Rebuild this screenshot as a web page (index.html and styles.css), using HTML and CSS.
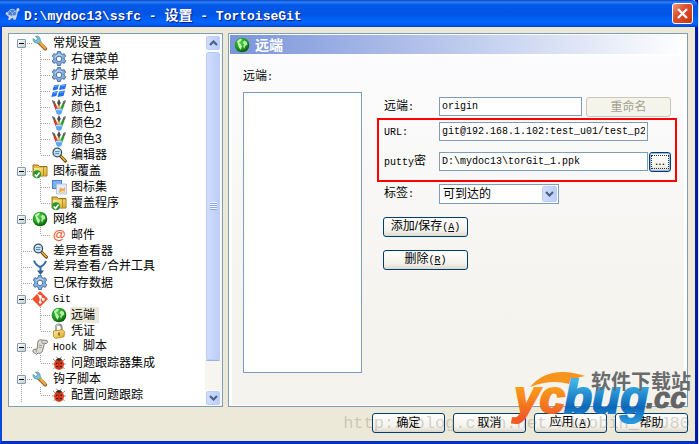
FILE: index.html
```html
<!DOCTYPE html>
<html lang="zh-CN">

<head>
    <meta charset="UTF-8" />
    <title>设置 - TortoiseGit</title>
    <link rel="stylesheet" href="styles.css">
</head>

<body>

    <!-- icons -->
    <svg class="defs" width="0" height="0">
        <defs>
            <linearGradient id="orange" x1="0" y1="0" x2="0" y2="1">
                <stop offset="0.2" stop-color="#fbaa19" />
                <stop offset="0.9" stop-color="#f15a24" />
            </linearGradient>
            <linearGradient id="blue" x1="0" y1="0" x2="0" y2="1">
                <stop offset="0.2" stop-color="#3fb3e6" />
                <stop offset="0.7" stop-color="#0d67b8" />
                <stop offset="1" stop-color="#2a9be0" />
            </linearGradient>
            <radialGradient id="ball" cx="0.4" cy="0.35" r="0.7">
                <stop offset="0" stop-color="#4ed04a" />
                <stop offset="0.6" stop-color="#1d9a1d" />
                <stop offset="1" stop-color="#0b4a0b" />
            </radialGradient>
            <linearGradient id="gold" x1="0" y1="0" x2="1" y2="1">
                <stop offset="0" stop-color="#fdf0a0" />
                <stop offset="1" stop-color="#dca820" />
            </linearGradient>
        </defs>
        <symbol id="i-wrench" viewBox="0 0 16 16">
            <path d="M7 7.500l6.300 6.200" stroke="#8a5a1c" stroke-width="3.600" stroke-linecap="round" />
            <path d="M7.400 7.400l5.800 5.800" stroke="#f6a93a" stroke-width="2.200" stroke-linecap="round" />
            <path d="M3.600 1.300l2 2-.6 1.700-1.800.4-2-2C.6 5.600 2.300 8 4.600 8c1 0 1.500 0 2.200.6l2-2.100C8.200 5.800 8.300 5.200 8.200 4.400 8 2 6 .5 3.600 1.300z" fill="#7cc4d8" stroke="#4a8ea6" stroke-width=".8" />
        </symbol>
        <symbol id="i-gear" viewBox="0 0 16 16">
            <path fill-rule="evenodd" d="M6.600.6h2.800l.5 2 1.300.7 2-.6 1.500 2.500-1.500 1.500v1.500l1.600 1.600-1.500 2.500-2.100-.7-1.300.8-.5 2.100H6.600l-.5-2.100-1.300-.8-2.100.7-1.500-2.500 1.600-1.600V6.700L1.300 5.200l1.500-2.500 2 .6 1.300-.7zM8 5.200a2.700 2.700 0 1 0 0 5.400 2.700 2.700 0 0 0 0-5.400z" fill="#85afe0" stroke="#3d6596" stroke-width=".9" />
            <path d="M4.200 6.500a4.200 4.200 0 0 1 7-1.500" fill="none" stroke="#c9def4" />
        </symbol>
        <symbol id="i-flag" viewBox="0 0 16 16">
            <path d="M3 2.500l5-1-1.500 5-5 1zM9.500 2l6-1-1.500 5-6 1zM1.800 9l5-1-1.500 5-5 1zM8 8.500l6-1L12.500 13l-6 1z" fill="#2470ee" />
            <path d="M3.800 3.500l3-.6M10.300 3l3.600-.6M2.600 10l3-.6M8.800 9.500l3.600-.6" stroke="#7db5fa" />
        </symbol>
        <symbol id="i-brush" viewBox="0 0 16 16">
            <path d="M3.500 5l3.300 8" stroke="#d0392b" stroke-width="2.600" />
            <path d="M12.500 5L9.200 13" stroke="#2f9e36" stroke-width="2.600" />
            <path d="M8 6v8" stroke="#e8b33b" stroke-width="2.400" />
            <path d="M1 1l1 3.500 2.500 1L4 2.500zM15 1l-1 3.500-2.500 1 .5-3zM6 4l2-4 1.800 4-1.800 3z" fill="#4a4a4a" />
            <path d="M2 1.500l1.500 3M14 1.500l-1.500 3" stroke="#999" stroke-width=".6" />
            <path d="M4.300 9.500h7.400L10.300 15q-2.300 1.500-4.600 0z" fill="#5ba6f0" />
            <path d="M5 10.700h6" stroke="#d3e9fc" />
        </symbol>
        <symbol id="i-lens" viewBox="0 0 16 16">
            <path d="M9.500 9l4.800 5" stroke="#5e3b0a" stroke-width="3.200" stroke-linecap="round" />
            <path d="M10 9.300l4.200 4.400" stroke="#f0b32e" stroke-width="1.600" stroke-linecap="round" />
            <circle cx="6.300" cy="5.500" r="4.300" fill="#bfe0f5" stroke="#3c4c5c" stroke-width="1.200" />
            <path d="M4 4.500h4.500M4 6.500h4" stroke="#5a90b8" />
            <path d="M3.600 3.800q1-1.400 2.800-1.300" stroke="#fff" fill="none" />
        </symbol>
        <symbol id="i-folder" viewBox="0 0 16 16">
            <path d="M1 4.500V2h5l1.500 1.500H15V13H1z" fill="#e5bd45" stroke="#8a6914" stroke-width=".9" />
            <path d="M2 5h12.500v7.500H2z" fill="url(#gold)" />
            <path d="M11.500 4v9" stroke="#b98d24" />
            <circle cx="5" cy="11.300" r="4" fill="#27962b" />
            <path d="M2.700 11.500l1.800 1.900 3-4" stroke="#fff" stroke-width="1.600" fill="none" />
        </symbol>
        <symbol id="i-set" viewBox="0 0 16 16">
            <path d="M1 1h10v9H1z" fill="#4b7ed0" />
            <path d="M2 2h8v3L5 9H2z" fill="#7fb0ee" />
            <path d="M5.500 5h10v10h-10z" fill="#e3ecf8" stroke="#a5bbdc" stroke-width=".8" />
            <path d="M8 13.500l1-5 3 1.500 2-2v5.500z" fill="#f5a347" />
            <path d="M9.500 13.500l1-2 2 .5 1-1v2.500z" fill="#fbd9a2" />
        </symbol>
        <symbol id="i-globe" viewBox="0 0 16 16">
            <circle cx="8" cy="8" r="7.300" fill="url(#ball)" />
            <path d="M3 4.200q2-2.400 5-2.400l-.8 2L5 5.500l1.500 1.700L8 9.300l-1.300 3.500L5 10.500 4.200 7.700z" fill="#c9f3b8" />
            <path d="M10 3.500l2.700 1.300.8 3-2 .6-1.300 3-1-2 .8-2.100L8.600 6z" fill="#b5eba3" />
        </symbol>
        <symbol id="i-merge" viewBox="0 0 16 16">
            <path d="M2 1.500q1.500 4.500 6 6.500M14 2q-1.500 4-5.500 6M8.500 7v7" fill="none" stroke="#3a6ca5" stroke-width="2" />
            <path d="M5 11.500h7L8.500 16z" fill="#2c5d96" />
        </symbol>
        <symbol id="i-git" viewBox="0 0 16 16">
            <path d="M8 0l8 8-8 8-8-8z" fill="#f05133" />
            <path d="M5.500 2.800l2.700 2.700v5.500M8.200 5.700l3 2.800" stroke="#fff" stroke-width="1.100" fill="none" />
            <circle cx="8.200" cy="5.500" r="1.400" fill="#fff" />
            <circle cx="8.200" cy="11.300" r="1.400" fill="#fff" />
            <circle cx="11.300" cy="8.500" r="1.400" fill="#fff" />
        </symbol>
        <symbol id="i-lock" viewBox="0 0 16 16">
            <path d="M5 8V4.300q0-2.800 2.800-2.800t2.800 2.800V8" fill="none" stroke="#8d8d8d" stroke-width="2" />
            <path d="M5 7V4.300q0-2.800 2.800-2.800" fill="none" stroke="#ddd" stroke-width=".8" />
            <path d="M2.500 8l9-1.300 2 1.800-.5 5.300-8.500 1.700-2-2z" fill="url(#gold)" stroke="#b0831a" stroke-width=".8" />
            <path d="M8 9.500v3" stroke="#6b4c08" stroke-width="1.400" />
        </symbol>
        <symbol id="i-script" viewBox="0 0 16 16">
            <path d="M6 2q2-2 4-1l5 .5q1.500 2-.5 3h-2L11 10q0 3-3 4.500l-2-.5-1.500 1.500L1 13q-1-2.500 2-3l2 .3z" fill="#dcdcd4" stroke="#77776f" stroke-width=".9" />
            <path d="M9 1.500q2 .5 1 3l4-.3M3 10.500q2 .3 1.500 3M7 6l3 .8M6.500 8l3 .8" stroke="#8d8d85" fill="none" stroke-width=".8" />
        </symbol>
        <symbol id="i-bug" viewBox="0 0 16 16">
            <path d="M2 4l3 2.500M14 4l-3 2.500M1 9h14M2.500 14L5 11M13.500 14L11 11M5.500 1.500L7 4M10.500 1.500L9 4" stroke="#777" stroke-width=".8" />
            <ellipse cx="8" cy="9.300" rx="5" ry="5.500" fill="#e0401c" />
            <path d="M4.800 5q3.200-4 6.400 0-3 1.500-6.400 0z" fill="#2b2b2b" />
            <path d="M8 5.500v9" stroke="#8f2010" stroke-width=".8" />
            <circle cx="5.700" cy="8.300" r=".8" fill="#2a0a05" />
            <circle cx="10.300" cy="8.300" r=".8" fill="#2a0a05" />
            <circle cx="6" cy="11.600" r=".8" fill="#2a0a05" />
            <circle cx="10" cy="11.600" r=".8" fill="#2a0a05" />
        </symbol>
        <symbol id="i-turtle" viewBox="0 0 16 16">
            <path d="M1.500 8q0-2 2-2l2 2 6.500-1 .5-4q1.500-2 3 0l-.3 2-1.400.8-.8 4-1.500 4H9.500l-.5-2-2 1-1.500 1.500-1.500-1L5 11z" fill="#cfd6dd" />
            <path d="M3.500 8.800Q4.500 3 8.500 3.300T12.500 9q-4.500 2.600-9-.2z" fill="#4d7fd6" stroke="#bdd4f7" stroke-width=".8" />
            <path d="M6 5l2.500 2L11 5M8.500 7v3" stroke="#9dc0f5" stroke-width=".8" fill="none" />
        </symbol>
        <symbol id="i-down" viewBox="0 0 9 6">
            <path d="M1 1l3.500 3.500L8 1" fill="none" stroke="#4d6185" stroke-width="2.200" />
        </symbol>
    </svg>

    <div class="window">
        <header class="titlebar">
            <svg class="icon"><use href="#i-turtle" /></svg>
            <h1>D:\mydoc13\ssfc - <span class="cjk">设置</span> - TortoiseGit</h1>
            <button class="close" type="button" aria-label="关闭">
                <svg width="11" height="11" viewBox="0 0 11 11">
                    <path d="M1 1l9 9M10 1l-9 9" stroke="#fff" stroke-width="2.200" />
                </svg>
            </button>
        </header>

        <main class="panels">
            <nav class="tree-box">
                <ul class="tree">
                    <li>
                        <div class="row"><button class="toggle" aria-label="折叠"></button><i class="dash"></i><svg class="icon"><use href="#i-wrench" /></svg><span class="name">常规设置</span></div>
                        <ul>
                            <li class="row"><i class="dash"></i><svg class="icon"><use href="#i-gear" /></svg><span class="name">右键菜单</span></li>
                            <li class="row"><i class="dash"></i><svg class="icon"><use href="#i-gear" /></svg><span class="name">扩展菜单</span></li>
                            <li class="row"><i class="dash"></i><svg class="icon"><use href="#i-flag" /></svg><span class="name">对话框</span></li>
                            <li class="row"><i class="dash"></i><svg class="icon"><use href="#i-brush" /></svg><span class="name">颜色1</span></li>
                            <li class="row"><i class="dash"></i><svg class="icon"><use href="#i-brush" /></svg><span class="name">颜色2</span></li>
                            <li class="row"><i class="dash"></i><svg class="icon"><use href="#i-brush" /></svg><span class="name">颜色3</span></li>
                            <li class="row"><i class="dash"></i><svg class="icon"><use href="#i-lens" /></svg><span class="name">编辑器</span></li>
                        </ul>
                    </li>
                    <li>
                        <div class="row"><button class="toggle" aria-label="折叠"></button><i class="dash"></i><svg class="icon"><use href="#i-folder" /></svg><span class="name">图标覆盖</span></div>
                        <ul>
                            <li class="row"><i class="dash"></i><svg class="icon"><use href="#i-set" /></svg><span class="name">图标集</span></li>
                            <li class="row"><i class="dash"></i><svg class="icon"><use href="#i-folder" /></svg><span class="name">覆盖程序</span></li>
                        </ul>
                    </li>
                    <li>
                        <div class="row"><button class="toggle" aria-label="折叠"></button><i class="dash"></i><svg class="icon"><use href="#i-globe" /></svg><span class="name">网络</span></div>
                        <ul>
                            <li class="row"><i class="dash"></i><span class="icon at">@</span><span class="name">邮件</span></li>
                        </ul>
                    </li>
                    <li>
                        <div class="row leaf"><i class="dash"></i><svg class="icon"><use href="#i-lens" /></svg><span class="name">差异查看器</span></div>
                    </li>
                    <li>
                        <div class="row leaf"><i class="dash"></i><svg class="icon"><use href="#i-merge" /></svg><span class="name">差异查看<span class="latin">/</span>合并工具</span></div>
                    </li>
                    <li>
                        <div class="row leaf"><i class="dash"></i><svg class="icon"><use href="#i-gear" /></svg><span class="name">已保存数据</span></div>
                    </li>
                    <li>
                        <div class="row"><button class="toggle" aria-label="折叠"></button><i class="dash"></i><svg class="icon"><use href="#i-git" /></svg><span class="name"><span class="latin">Git</span></span></div>
                        <ul>
                            <li class="row"><i class="dash"></i><svg class="icon"><use href="#i-globe" /></svg><span class="name selected">远端</span></li>
                            <li class="row"><i class="dash"></i><svg class="icon"><use href="#i-lock" /></svg><span class="name">凭证</span></li>
                        </ul>
                    </li>
                    <li>
                        <div class="row"><button class="toggle" aria-label="折叠"></button><i class="dash"></i><svg class="icon"><use href="#i-script" /></svg><span class="name"><span class="latin">Hook </span>脚本</span></div>
                        <ul>
                            <li class="row"><i class="dash"></i><svg class="icon"><use href="#i-bug" /></svg><span class="name">问题跟踪器集成</span></li>
                        </ul>
                    </li>
                    <li>
                        <div class="row"><button class="toggle" aria-label="折叠"></button><i class="dash"></i><svg class="icon"><use href="#i-wrench" /></svg><span class="name">钩子脚本</span></div>
                        <ul>
                            <li class="row"><i class="dash"></i><svg class="icon"><use href="#i-bug" /></svg><span class="name">配置问题跟踪</span></li>
                        </ul>
                    </li>
                </ul>
                <div class="scrollbar">
                    <button class="arrow up" type="button" aria-label="向上"><svg width="9" height="6"><use href="#i-down" /></svg></button>
                    <div class="thumb"><i class="grip"></i></div>
                    <button class="arrow" type="button" aria-label="向下"><svg width="9" height="6"><use href="#i-down" /></svg></button>
                </div>
            </nav>

            <section class="page">
                <h2 class="page-title"><svg class="icon"><use href="#i-globe" /></svg>远端</h2>
                <div class="page-body">
                    <div class="remotes">
                        <span id="remotesLabel">远端<span class="latin">:</span></span>
                        <div class="remote-list" role="listbox" aria-labelledby="remotesLabel"></div>
                    </div>
                    <form class="form">
                        <div class="field">
                            <label for="remote">远端<span class="latin">:</span></label>
                            <input type="text" id="remote" value="origin" />
                            <button class="btn rename" type="button" disabled>重命名</button>
                        </div>
                        <div class="marked">
                            <div class="field">
                                <label for="url"><span class="latin">URL:</span></label>
                                <input class="url" type="text" id="url" value="git@192.168.1.102:test_u01/test_p2" />
                            </div>
                            <div class="field">
                                <label for="key"><span class="latin">putty</span>密</label>
                                <input type="text" id="key" value="D:\mydoc13\torGit_1.ppk" />
                                <button class="btn browse" type="button"><span>...</span></button>
                            </div>
                        </div>
                        <div class="field">
                            <label for="tags">标签<span class="latin">:</span></label>
                            <div class="combo">
                                <select id="tags">
                                    <option>可到达的</option>
                                </select>
                                <span class="drop"><svg width="9" height="6"><use href="#i-down" /></svg></span>
                            </div>
                        </div>
                        <div class="actions">
                            <button class="btn" type="button">添加/保存<span class="latin">(<u>A</u>)</span></button>
                            <button class="btn" type="button">删除<span class="latin">(<u>R</u>)</span></button>
                        </div>
                    </form>
                </div>
            </section>
        </main>

        <footer class="footer">
            <button class="btn" type="button">确定</button>
            <button class="btn" type="button">取消</button>
            <button class="btn" type="button">应用<span class="latin">(<u>A</u>)</span></button>
            <button class="btn" type="button">帮助</button>
        </footer>

        <div class="watermark">http://blog.csdn.net/xiaobin_HLJ80</div>
        <svg class="logo" width="184" height="60" viewBox="0 0 184 60">
            <path d="M19 18Q38-5 74 7 64 8 58 15 40 10 19 18z" fill="#f7941d" />
            <g class="logo-text">
                <text x="3" y="44" fill="url(#orange)" stroke="url(#orange)">yc</text>
                <text x="53" y="44" fill="url(#blue)" stroke="url(#blue)">bug</text>
                <text x="135" y="39" class="logo-cc">.cc</text>
            </g>
            <text x="80" y="20" class="logo-site">软件下载站</text>
        </svg>
    </div>

</body>

</html>
```

FILE: styles.css
```css
* {
    box-sizing: border-box;
}

body {
    margin: 0;
    padding-right: 1px;
    background: #dfe6f2;
    font-family: "Liberation Sans", "Noto Sans CJK SC", sans-serif;
    font-size: 12px;
    line-height: 16px;
    color: #000;
}

button,
input,
select {
    font: inherit;
    color: inherit;
    margin: 0;
    padding: 0;
}

ul {
    list-style: none;
    margin: 0;
    padding: 0;
}

.defs {
    position: absolute;
}

.icon {
    width: 16px;
    height: 16px;
    flex: none;
}

.latin {
    font-family: "Liberation Mono", monospace;
    font-size: 10px;
    white-space: pre;
}

.window {
    position: relative;
    display: flex;
    flex-direction: column;
    min-height: 100vh;
    background: #ece9d8;
    border: solid #0a48e0;
    border-width: 0 3px 3px 2px;
    border-right-color: #0019a8;
    border-bottom-color: #0230c4;
}

/* title bar */

.titlebar {
    display: flex;
    align-items: center;
    height: 27px;
    margin: 0 -3px 0 -2px;
    padding: 0 5px 0 4px;
    border-radius: 0 6px 0 0;
    background: linear-gradient(#0a3fc0, #2b80f8 2px, #0458e6 5px, #0055e5 14px, #0266fd 22px, #0059f0 25px, #003cc8);
}

.titlebar h1 {
    flex: 1;
    margin: 0 0 0 4px;
    font: bold 13px "Liberation Mono", "Noto Sans CJK SC", monospace;
    color: #fff;
    text-shadow: 1px 1px 1px #0a1883;
}

.titlebar .cjk {
    font-size: 14px;
}

.close {
    display: flex;
    align-items: center;
    justify-content: center;
    width: 21px;
    height: 21px;
    border: 1px solid #fff;
    border-radius: 3px;
    background: linear-gradient(135deg, #ee9a82, #de5030 40%, #c83410);
}

.panels {
    flex: 1;
    display: flex;
    gap: 5px;
    padding: 6px 7px 0 6px;
}

/* tree */

.tree-box {
    display: flex;
    flex: none;
    width: 215px;
    background: #fff;
    border: 1px solid #7f9db9;
}

.tree {
    flex: 1;
    padding-top: 1px;
}

.tree > li {
    background: repeating-linear-gradient(#a0a0a0 0 1px, transparent 1px 2px) 12px 0 / 1px 100% no-repeat;
}

.tree > li:first-child {
    background-position: 12px 8px;
}

.tree ul {
    margin-left: 31px;
    background: repeating-linear-gradient(#a0a0a0 0 1px, transparent 1px 2px) 0 0 / 1px calc(100% - 8px) no-repeat;
}

.row {
    display: flex;
    align-items: center;
    height: 16px;
    white-space: nowrap;
}

div.row {
    padding-left: 8px;
}

div.leaf {
    padding-left: 13px;
}

.dash {
    width: 6px;
    height: 1px;
    background: repeating-linear-gradient(90deg, transparent 0 1px, #a0a0a0 1px 2px);
}

.leaf .dash {
    width: 10px;
}

li.row .dash {
    width: 11px;
}

.toggle {
    width: 9px;
    height: 9px;
    border: 1px solid #7b9cbe;
    border-radius: 1px;
    background: linear-gradient(#000, #000) center / 5px 1px no-repeat, linear-gradient(135deg, #fff, #d0cabc);
}

.name {
    margin-left: 4px;
    padding: 0 1px;
}

li.row .name {
    margin-left: 3px;
}

.name.selected {
    background: #ece9d8;
    padding-right: 4px;
}

.at {
    font-size: 13px;
    font-weight: bold;
    font-style: italic;
    line-height: 15px;
    text-align: center;
    color: #f0532d;
}

.scrollbar {
    display: flex;
    flex-direction: column;
    width: 17px;
    padding: 1px 1px 0 0;
    background: #f6f5f0;
}

.arrow,
.thumb,
.drop {
    display: flex;
    align-items: center;
    justify-content: center;
    border: 1px solid #fff;
    border-radius: 3px;
    background: linear-gradient(90deg, #d2defd, #b9cdfa);
    box-shadow: inset 0 0 0 1px #bccdf5;
}

.arrow {
    height: 16px;
}

.arrow.up svg {
    transform: rotate(180deg);
}

.thumb {
    height: 310px;
    margin-bottom: auto;
    border-bottom-color: #9ab2dd;
}

.grip {
    width: 7px;
    height: 8px;
    background: repeating-linear-gradient(#f0f5ff 0 1px, #8ca8e0 1px 2px);
}

/* settings page */

.page {
    flex: 1;
    display: flex;
    flex-direction: column;
    padding: 1px;
    background: #fff;
    border: 1px solid #7f9db9;
}

.page-title {
    display: flex;
    align-items: center;
    gap: 5px;
    height: 19px;
    margin: 0 0 2px;
    padding-left: 4px;
    font-size: 14px;
    color: #fff;
    background: linear-gradient(90deg, #7b95db, #fff);
}

.page-body {
    flex: 1;
    display: flex;
    gap: 15px;
    margin: 0 2px;
    padding: 12px 7px 31px 11px;
    background: linear-gradient(#fcfcfe, #f4f3ee 75%);
}

.remotes {
    display: flex;
    flex-direction: column;
    gap: 6px;
    width: 119px;
}

.remote-list {
    flex: 1;
    margin-bottom: 1px;
    background: #fff;
    border: 1px solid #7f9db9;
}

.form {
    flex: 1;
    padding-top: 29px;
}

.field {
    display: flex;
    align-items: center;
    height: 19px;
    padding: 0 6px 0 7px;
}

.field label {
    flex: none;
    width: 55px;
}

.field input {
    flex: 1;
    min-width: 0;
    height: 19px;
    padding: 0 2px;
    background: #fff;
    border: 1px solid #7f9db9;
    font-family: "Liberation Mono", monospace;
    font-size: 10px;
}

.marked {
    display: flex;
    flex-direction: column;
    gap: 11px;
    margin: 2px 0;
    padding: 2px 0 9px;
    border: 2px solid #f00;
}

.marked .field {
    padding: 0 4px 0 5px;
}

.field input.url {
    margin-right: 23px;
}

.btn {
    height: 20px;
    border: 1px solid #003c74;
    border-radius: 3px;
    background: linear-gradient(#fff, #f3f2ec 70%, #dcd8cc);
    line-height: 16px;
}

.btn:disabled {
    border-color: #c9c7ba;
    background: #f5f4ea;
    color: #a1a192;
}

.btn.rename {
    width: 85px;
    margin-left: 4px;
}

.btn.browse {
    width: 22px;
    margin-left: 1px;
    padding: 1px;
    box-shadow: inset 0 0 0 1px #98b8ea;
}

.browse span {
    display: block;
    height: 14px;
    border: 1px dotted #333;
    line-height: 10px;
}

.combo {
    position: relative;
    width: 120px;
}

.combo select {
    display: block;
    width: 100%;
    height: 20px;
    padding: 0 20px 0 3px;
    appearance: none;
    background: #fff;
    border: 1px solid #7f9db9;
    border-radius: 0;
}

.drop {
    position: absolute;
    top: 1px;
    right: 1px;
    bottom: 1px;
    width: 17px;
    pointer-events: none;
}

.actions {
    display: flex;
    flex-direction: column;
    gap: 13px;
    width: 85px;
    margin: 14px 0 0 6px;
}

.footer {
    display: flex;
    justify-content: flex-end;
    gap: 8px;
    padding: 6px 7px 8px;
}

.footer .btn {
    width: 73px;
}

/* overlays */

.watermark {
    position: absolute;
    right: 5px;
    bottom: 8px;
    font: 17px "Liberation Mono", monospace;
    color: rgba(120, 115, 100, 0.3);
    pointer-events: none;
}

.logo {
    position: absolute;
    right: 0;
    bottom: 12px;
    pointer-events: none;
}

.logo-text {
    font: italic bold 46px "Liberation Sans", sans-serif;
    stroke-width: 2px;
}

.logo-cc {
    font-size: 29px;
    fill: #636466;
    stroke: #636466;
    stroke-width: 1px;
}

.logo-site {
    font: bold 20px "Noto Sans CJK SC", sans-serif;
    fill: #6a6b6d;
}
```
